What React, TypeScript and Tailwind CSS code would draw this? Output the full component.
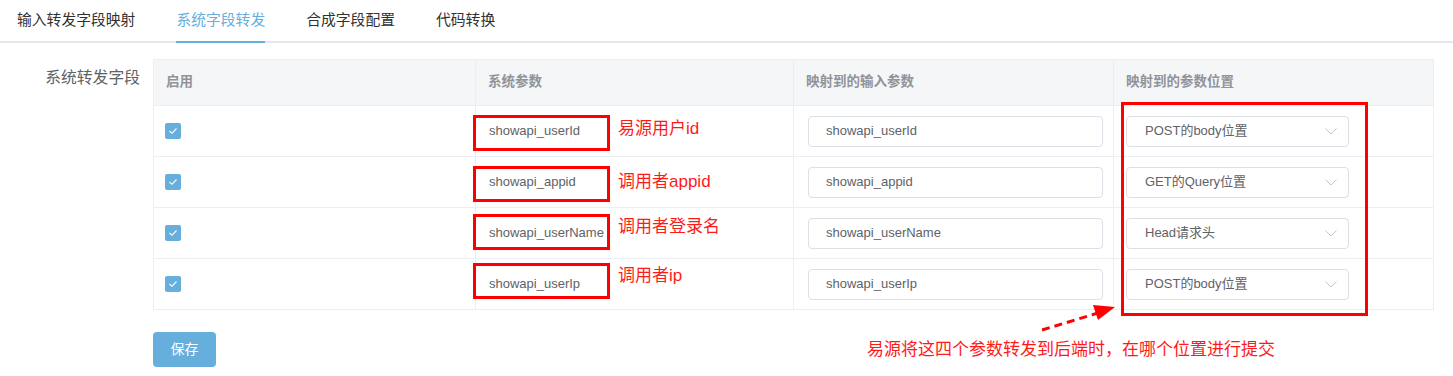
import { useState } from "react";

const tabs = ["输入转发字段映射", "系统字段转发", "合成字段配置", "代码转换"];

// rows of the system forwarding table, with annotation offsets
const rows = [
  { name: "showapi_userId", pos: "POST的body位置", note: "易源用户id", boxTop: "top-[9px]", noteTop: "top-[13px]" },
  { name: "showapi_appid", pos: "GET的Query位置", note: "调用者appid", boxTop: "top-[9px]", noteTop: "top-[15px]" },
  { name: "showapi_userName", pos: "Head请求头", note: "调用者登录名", boxTop: "top-[6px]", noteTop: "top-[9px]" },
  { name: "showapi_userIp", pos: "POST的body位置", note: "调用者ip", boxTop: "top-[4px]", noteTop: "top-[7px]" },
];

function Check() {
  return (
    <span className="flex h-4 w-4 items-center justify-center rounded-[2px] bg-[#66aedc]">
      <svg width="10" height="8" viewBox="0 0 10 8" fill="none" stroke="#ffffff" strokeWidth="1.1">
        <polyline points="1.5 4 4 6.3 8.5 1.5" />
      </svg>
    </span>
  );
}

export default function App() {
  const [active, setActive] = useState(1);

  return (
    <div className="relative h-[376px] w-[1453px] overflow-hidden bg-white font-['Liberation_Sans','Noto_Sans_CJK_SC',sans-serif] text-[#303133]">
      {/* tabs */}
      <nav className="flex h-[43px] gap-[41px] border-b-2 border-[#e4e7ed] pl-[17px]">
        {tabs.map((t, i) => (
          <div
            key={t}
            onClick={() => setActive(i)}
            className={
              i === active
                ? "relative flex h-full cursor-pointer items-center text-[14.8px] text-[#66aedc]"
                : "relative flex h-full cursor-pointer items-center text-[14.8px] text-[#303133]"
            }
          >
            {t}
            {i === active && <span className="absolute bottom-[-2px] left-0 h-[2px] w-full bg-[#66aedc]" />}
          </div>
        ))}
      </nav>

      <div className="mt-[16px] flex">
        <div className="w-[140px] pt-[7px] text-right text-[15.8px] text-[#606266]">系统转发字段</div>

        <div className="ml-[13px]">
          <div className="w-[1281px] border border-b-0 border-[#ebeef5] text-[13px]">
            {/* header */}
            <div className="grid h-[46px] grid-cols-[322px_318px_320px_319px] border-b border-[#ebeef5] bg-[#f5f6f7] text-[13.5px] font-bold text-[#909399]">
              <div className="flex items-center border-r border-[#ebeef5] pl-[12px]">启用</div>
              <div className="flex items-center border-r border-[#ebeef5] pl-[12px]">系统参数</div>
              <div className="flex items-center border-r border-[#ebeef5] pl-[12px]">映射到的输入参数</div>
              <div className="flex items-center pl-[12px]">映射到的参数位置</div>
            </div>

            {rows.map((r) => (
              <div key={r.name} className="grid h-[51px] grid-cols-[322px_318px_320px_319px] border-b border-[#ebeef5] text-[#606266]">
                <div className="flex items-center border-r border-[#ebeef5] pl-[11px]">
                  <Check />
                </div>
                <div className="relative flex items-center border-r border-[#ebeef5] pl-[13px]">
                  {r.name}
                  <span className={"absolute left-[-3px] h-[36px] w-[137px] border-[3px] border-[#ff0000] " + r.boxTop} />
                  <span className={"absolute left-[142px] text-[17px] leading-[20px] text-[#ff1a1a] " + r.noteTop}>{r.note}</span>
                </div>
                <div className="flex items-center border-r border-[#ebeef5] pl-[14px]">
                  <div className="flex h-[31px] w-[295px] items-center rounded-[4px] border border-[#dcdfe6] pl-[17px]">{r.name}</div>
                </div>
                <div className="flex items-center pl-[12px]">
                  <div className="flex h-[31px] w-[223px] items-center justify-between rounded-[4px] border border-[#dcdfe6] pl-[18px] pr-[11px]">
                    <span>{r.pos}</span>
                    <svg width="12" height="7" viewBox="0 0 12 7" fill="none" stroke="#c0c4cc" strokeWidth="1">
                      <polyline points="0.5 0.5 6 6 11.5 0.5" />
                    </svg>
                  </div>
                </div>
              </div>
            ))}
          </div>

          <button className="mt-[22px] h-[35px] w-[63px] rounded-[4px] bg-[#66aedc] text-[14px] text-white">保存</button>
        </div>
      </div>

      {/* annotations */}
      <div className="absolute left-[1121px] top-[102px] h-[214px] w-[247px] border-[3px] border-[#ff0000]" />
      <svg className="absolute left-[1036px] top-[300px]" width="84" height="36" viewBox="0 0 84 36" fill="none">
        <line x1="6" y1="30" x2="62" y2="13" stroke="#ff0000" strokeWidth="3" strokeDasharray="8 5" />
        <polygon points="79,7 57,5 62,20" fill="#ff0000" />
      </svg>
      <div className="absolute left-[867px] top-[339px] text-[17px] leading-[22px] text-[#ff1a1a]">易源将这四个参数转发到后端时，在哪个位置进行提交</div>
    </div>
  );
}
